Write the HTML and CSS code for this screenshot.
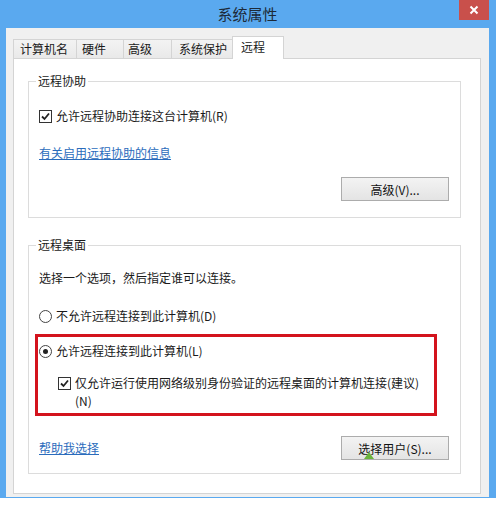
FILE: index.html
```html
<!DOCTYPE html>
<html>
<head>
<meta charset="utf-8">
<link rel="stylesheet" href="styles.css">
</head>
<body>
<div class="window">
  <div class="titlebar">
    <span class="title">系统属性</span>
    <div class="close"><svg width="10" height="10" viewBox="0 0 10 10"><path d="M1.5 1.5 L8.5 8.5 M8.5 1.5 L1.5 8.5" stroke="#fff" stroke-width="2"/></svg></div>
  </div>
  <div class="frame">
    <div class="tabs">
      <div class="tab t1">计算机名</div>
      <div class="tab t2">硬件</div>
      <div class="tab t3">高级</div>
      <div class="tab t4">系统保护</div>
      <div class="tab active t5">远程</div>
    </div>
    <div class="panel">
      <fieldset class="group g1">
        <legend>远程协助</legend>
        <div class="row r1">
          <span class="cb"><svg width="11" height="11" viewBox="0 0 11 11"><path d="M2 5.5 L4.5 8 L9 2.5" fill="none" stroke="#222" stroke-width="1.8"/></svg></span>
          <span>允许远程协助连接这台计算机(R)</span>
        </div>
        <div class="linkrow"><a class="link">有关启用远程协助的信息</a></div>
        <div class="btnrow"><button class="btn">高级(V)...</button></div>
      </fieldset>
      <fieldset class="group g2">
        <legend>远程桌面</legend>
        <div class="desc">选择一个选项，然后指定谁可以连接。</div>
        <div class="row r-deny"><span class="radio"></span><span>不允许远程连接到此计算机(D)</span></div>
        <div class="highlight">
          <div class="row r-allow"><span class="radio on"></span><span>允许远程连接到此计算机(L)</span></div>
          <div class="row sub">
            <span class="cb"><svg width="11" height="11" viewBox="0 0 11 11"><path d="M2 5.5 L4.5 8 L9 2.5" fill="none" stroke="#222" stroke-width="1.8"/></svg></span>
            <span class="wrap">仅允许运行使用网络级别身份验证的远程桌面的计算机连接(建议)<br>(N)</span>
          </div>
        </div>
        <div class="bottomrow">
          <a class="link">帮助我选择</a>
          <button class="btn">选择用户(S)...<span class="cursor"></span></button>
        </div>
      </fieldset>
    </div>
  </div>
</div>
</body>
</html>
```
FILE: styles.css
```css
* { box-sizing: border-box; }
body {
  margin: 0;
  background: #fff;
  font-family: "Noto Sans CJK SC", "Noto Sans", sans-serif;
  font-size: 12px;
  color: #1a1a1a;
}
.window {
  width: 496px;
  height: 498px;
  background: #5aa9ef;
  padding: 0 7px 1px 6px;
}
.titlebar {
  position: relative;
  height: 28px;
  display: flex;
  justify-content: center;
}
.title {
  font-size: 15px;
  line-height: 27px;
  color: #1d2a38;
}
.close {
  position: absolute;
  right: 0;
  top: 0;
  width: 30px;
  height: 20px;
  background: #c9504b;
  display: flex;
  align-items: center;
  justify-content: center;
}
.frame {
  background: #f0f0f0;
  height: 469px;
  padding: 8px 8px 3px 7px;
}
.tabs {
  height: 22px;
  display: flex;
  align-items: flex-end;
}
.tab {
  height: 19px;
  border: 1px solid #d4d4d4;
  border-bottom: none;
  background: linear-gradient(#f3f3f3, #e9e9e9);
  line-height: 17px;
  padding-left: 6px;
  margin-left: -1px;
  color: #1a1a1a;
}
.t1 { width: 64px; margin-left: 0; }
.t2 { width: 48px; padding-left: 5px; }
.t3 { width: 49px; padding-left: 4px; }
.t4 { width: 62px; padding-left: 7px; }
.tab.active {
  width: 52px;
  height: 23px;
  margin-bottom: -1px;
  background: #fff;
  position: relative;
  z-index: 1;
  line-height: 19px;
  padding-left: 8px;
}
.panel {
  height: 436px;
  background: #fff;
  border: 1px solid #d4d4d4;
  padding-top: 14px;
}
.group {
  margin: 0 19px 0 14px;
  border: 1px solid #dcdcdc;
  min-width: 0;
}
.group legend {
  margin-left: -3px;
  padding: 0 2px;
  line-height: 16px;
}
.g1 { padding: 19px 11px 16px 10px; }
.g2 { padding: 17px 11px 13px 10px; margin-top: 19px; }
.row {
  display: flex;
  align-items: center;
  height: 16px;
  line-height: 16px;
}
.cb {
  width: 13px;
  height: 13px;
  border: 1px solid #333;
  background: #fff;
  display: flex;
  align-items: center;
  justify-content: center;
  margin-right: 4px;
  flex: none;
}
.radio {
  width: 13px;
  height: 13px;
  border: 1px solid #444;
  border-radius: 50%;
  background: #fff;
  margin-right: 4px;
  flex: none;
  display: flex;
  align-items: center;
  justify-content: center;
}
.radio.on::after {
  content: "";
  width: 5px;
  height: 5px;
  border-radius: 50%;
  background: #222;
}
.r1 { margin-bottom: 21px; }
.linkrow { line-height: 16px; height: 16px; margin-bottom: 16px; }
.link {
  color: #2b6cbc;
  text-decoration: underline;
  line-height: 16px;
}
.btnrow { display: flex; justify-content: flex-end; }
.btn {
  position: relative;
  width: 108px;
  height: 24px;
  border: 1px solid #acacac;
  background: linear-gradient(#f3f3f3, #e4e4e4);
  font-family: inherit;
  font-size: 12px;
  color: #111;
  padding: 0;
}
.desc { line-height: 16px; margin-bottom: 22px; }
.r-deny { margin-bottom: 10px; }
.highlight {
  width: 402px;
  margin-left: -4px;
  border: 3px solid #d3131d;
  padding: 6px 0 3px 1px;
}
.r-allow { margin-bottom: 15px; }
.row.sub {
  height: auto;
  align-items: flex-start;
  line-height: 18px;
  margin-left: 19px;
}
.row.sub .cb { margin-top: 3px; }
.bottomrow {
  margin-top: 20px;
  display: flex;
  justify-content: space-between;
  align-items: center;
}
.cursor {
  position: absolute;
  left: 22px;
  top: 15px;
  width: 0;
  height: 0;
  border-left: 5px solid transparent;
  border-right: 5px solid transparent;
  border-bottom: 7px solid #6ab43c;
}
```
